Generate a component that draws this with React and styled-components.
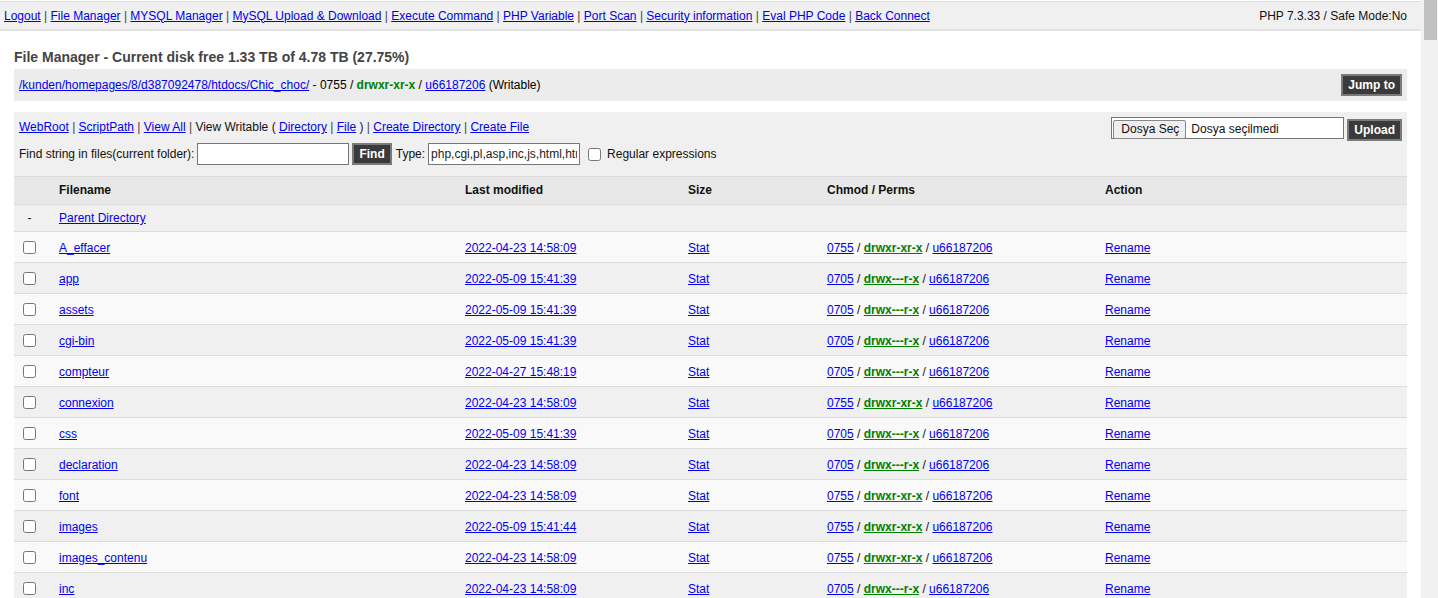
import React from "react";
import styled, { createGlobalStyle } from "styled-components";

const GlobalStyle = createGlobalStyle`
  html, body {
    margin: 0;
    padding: 0;
    background: #fff;
    overflow: hidden;
  }

  body {
    font-family: "Liberation Sans", Arial, sans-serif;
    font-size: 12px;
    color: #000;
  }

  a {
    color: #0000ee;
    text-decoration: underline;
  }
`;

export const Shell = styled.div`
  display: flex;
  height: 100vh;
  overflow: hidden;
`;

export const Page = styled.div`
  flex: 1;
  min-width: 0;
  overflow: hidden;
`;

// browser scrollbar on the right edge
export const ScrollTrack = styled.div`
  flex-shrink: 0;
  width: 17px;
  padding: 0 1px 0 3px;
  box-sizing: border-box;
  background: #f1f1f1;
`;

export const ScrollThumb = styled.div`
  height: 40px;
  background: #c1c1c1;
`;

export const TopBar = styled.div`
  display: flex;
  justify-content: space-between;
  align-items: center;
  height: 27px;
  margin-top: 1px;
  padding: 0 14px 0 4px;
  background: #f0f0f0;
  border-top: 1px solid #dedede;
  border-bottom: 2px solid #e2e2e2;
`;

export const Sep = styled.span`
  color: #444;
`;

export const Version = styled.span`
  color: #111;
`;

export const Content = styled.div`
  padding: 0 14px 40px 14px;
`;

export const Title = styled.h2`
  margin: 18px 0 4px 0;
  font-size: 14px;
  line-height: 16px;
  font-weight: bold;
  color: #444;
`;

export const PathBar = styled.div`
  display: flex;
  justify-content: space-between;
  align-items: center;
  height: 32px;
  padding: 0 5px;
  box-sizing: border-box;
  background: #ececec;
`;

export const Perm = styled.span`
  color: #008000;
  font-weight: bold;
`;

export const PermLink = styled.a`
  && {
    color: #008000;
    font-weight: bold;
  }
`;

export const DarkButton = styled.button`
  height: 22px;
  padding: 0 5px;
  margin-left: ${(p) => p.$ml || 0}px;
  margin-top: ${(p) => p.$mt || 0}px;
  background: #3a3a3a;
  color: #fff;
  border: 2px solid #7a7a7a;
  font-family: "Liberation Sans", Arial, sans-serif;
  font-size: 12px;
  font-weight: bold;
  cursor: pointer;
`;

export const Toolbar = styled.div`
  display: flex;
  justify-content: space-between;
  align-items: flex-start;
  height: 64px;
  margin-top: 11px;
  padding: 5px 5px 0 5px;
  box-sizing: border-box;
  background: #f0f0f0;
`;

export const ToolColumn = styled.div`
  display: flex;
  flex-direction: column;
  gap: 6px;
`;

export const ToolLine = styled.div`
  display: flex;
  align-items: center;
  height: ${(p) => p.$h || 20}px;
  white-space: pre;
`;

export const Label = styled.span`
  color: #111;
  margin-left: ${(p) => p.$ml || 0}px;
  margin-right: ${(p) => p.$mr || 0}px;
`;

export const TextInput = styled.input`
  width: ${(p) => p.$w}px;
  height: 22px;
  box-sizing: border-box;
  padding: 1px 2px;
  border: 1px solid #767676;
  background: #fff;
  font-family: "Liberation Sans", Arial, sans-serif;
  font-size: 12px;
  color: #222;
  outline: none;
`;

export const Check = styled.input`
  width: 13px;
  height: 13px;
  margin: 0 0 0 ${(p) => p.$ml || 0}px;
`;

export const UploadForm = styled.div`
  display: flex;
  align-items: flex-start;
  gap: 3px;
`;

export const FileBox = styled.label`
  display: flex;
  align-items: center;
  width: 233px;
  height: 22px;
  box-sizing: border-box;
  padding: 2px 2px 0 1px;
  border: 1px solid #767676;
  background: #fff;
  font-size: 12px;
  color: #111;
`;

export const FilePick = styled.span`
  display: flex;
  align-items: center;
  height: 17px;
  padding: 0 6px 0 7px;
  margin-right: 5px;
  background: #efefef;
  border: 1px solid #888;
  border-radius: 2px;
`;

export const Table = styled.div`
  border-top: 1px solid #dcdcdc;
`;

export const Row = styled.div`
  display: grid;
  grid-template-columns: 45px 406px 223px 139px 278px 1fr;
  align-items: center;
  height: ${(p) => p.$h}px;
  padding-top: ${(p) => p.$pt || 0}px;
  padding-bottom: ${(p) => p.$pb || 0}px;
  box-sizing: border-box;
  background: ${(p) => p.$bg};
  border-bottom: 1px solid #dcdcdc;
  font-weight: ${(p) => (p.$head ? "bold" : "normal")};
  color: #111;
`;

export const FirstCell = styled.div`
  display: flex;
  align-items: center;
  padding-left: 9px;
`;

export const Dash = styled.span`
  width: 13px;
  text-align: center;
  color: #111;
`;

export const Cell = styled.div`
  white-space: nowrap;
`;

const menu = [
  "Logout",
  "File Manager",
  "MYSQL Manager",
  "MySQL Upload & Download",
  "Execute Command",
  "PHP Variable",
  "Port Scan",
  "Security information",
  "Eval PHP Code",
  "Back Connect",
];

const files = [
  ["A_effacer", "2022-04-23 14:58:09", "0755", "drwxr-xr-x"],
  ["app", "2022-05-09 15:41:39", "0705", "drwx---r-x"],
  ["assets", "2022-05-09 15:41:39", "0705", "drwx---r-x"],
  ["cgi-bin", "2022-05-09 15:41:39", "0705", "drwx---r-x"],
  ["compteur", "2022-04-27 15:48:19", "0705", "drwx---r-x"],
  ["connexion", "2022-04-23 14:58:09", "0755", "drwxr-xr-x"],
  ["css", "2022-05-09 15:41:39", "0705", "drwx---r-x"],
  ["declaration", "2022-04-23 14:58:09", "0705", "drwx---r-x"],
  ["font", "2022-04-23 14:58:09", "0755", "drwxr-xr-x"],
  ["images", "2022-05-09 15:41:44", "0755", "drwxr-xr-x"],
  ["images_contenu", "2022-04-23 14:58:09", "0755", "drwxr-xr-x"],
  ["inc", "2022-04-23 14:58:09", "0705", "drwx---r-x"],
];

function App() {
  return (
    <Shell>
      <GlobalStyle />

      <Page>
        {/* Top menu */}
        <TopBar>
          <div>
            {menu.map((item, i) => (
              <React.Fragment key={item}>
                {i > 0 && (
                  <>
                    {" "}
                    <Sep>|</Sep>{" "}
                  </>
                )}
                <a href="#">{item}</a>
              </React.Fragment>
            ))}
          </div>
          <Version>PHP 7.3.33 / Safe Mode:No</Version>
        </TopBar>

        <Content>
          <Title>
            File Manager - Current disk free 1.33 TB of 4.78 TB (27.75%)
          </Title>

          {/* Current path */}
          <PathBar>
            <div>
              <a href="#">/kunden/homepages/8/d387092478/htdocs/Chic_choc/</a>{" "}
              - 0755 / <Perm>drwxr-xr-x</Perm> / <a href="#">u66187206</a>{" "}
              (Writable)
            </div>
            <DarkButton>Jump to</DarkButton>
          </PathBar>

          {/* Tools */}
          <Toolbar>
            <ToolColumn>
              <ToolLine>
                <a href="#">WebRoot</a>
                <Sep> | </Sep>
                <a href="#">ScriptPath</a>
                <Sep> | </Sep>
                <a href="#">View All</a>
                <Sep> | </Sep>
                <Label>View Writable ( </Label>
                <a href="#">Directory</a>
                <Sep> | </Sep>
                <a href="#">File</a>
                <Label> ) </Label>
                <Sep>| </Sep>
                <a href="#">Create Directory</a>
                <Sep> | </Sep>
                <a href="#">Create File</a>
              </ToolLine>
              <ToolLine $h={22}>
                <Label $mr={3}>Find string in files(current folder):</Label>
                <TextInput $w={152} defaultValue="" />
                <DarkButton $ml={3}>Find</DarkButton>
                <Label $ml={4} $mr={3}>
                  Type:
                </Label>
                <TextInput
                  $w={152}
                  defaultValue="php,cgi,pl,asp,inc,js,html,htm,jsp"
                />
                <Check type="checkbox" $ml={8} />
                <Label $ml={6}>Regular expressions</Label>
              </ToolLine>
            </ToolColumn>

            <UploadForm>
              <FileBox>
                <FilePick>Dosya Seç</FilePick>
                Dosya seçilmedi
              </FileBox>
              <DarkButton $mt={2}>Upload</DarkButton>
            </UploadForm>
          </Toolbar>

          {/* File list */}
          <Table>
            <Row $h={28} $pb={2} $bg="#e8e8e8" $head>
              <FirstCell />
              <Cell>Filename</Cell>
              <Cell>Last modified</Cell>
              <Cell>Size</Cell>
              <Cell>Chmod / Perms</Cell>
              <Cell>Action</Cell>
            </Row>
            <Row $h={27} $bg="#f0f0f0">
              <FirstCell>
                <Dash>-</Dash>
              </FirstCell>
              <Cell>
                <a href="#">Parent Directory</a>
              </Cell>
            </Row>
            {files.map(([name, date, mode, perm], i) => (
              <Row
                key={name}
                $h={31}
                $pt={1}
                $bg={i % 2 === 0 ? "#f9f9f9" : "#f0f0f0"}
              >
                <FirstCell>
                  <Check type="checkbox" />
                </FirstCell>
                <Cell>
                  <a href="#">{name}</a>
                </Cell>
                <Cell>
                  <a href="#">{date}</a>
                </Cell>
                <Cell>
                  <a href="#">Stat</a>
                </Cell>
                <Cell>
                  <a href="#">{mode}</a> /{" "}
                  <PermLink href="#">{perm}</PermLink> /{" "}
                  <a href="#">u66187206</a>
                </Cell>
                <Cell>
                  <a href="#">Rename</a>
                </Cell>
              </Row>
            ))}
          </Table>
        </Content>
      </Page>

      <ScrollTrack>
        <ScrollThumb />
      </ScrollTrack>
    </Shell>
  );
}

export default App;
